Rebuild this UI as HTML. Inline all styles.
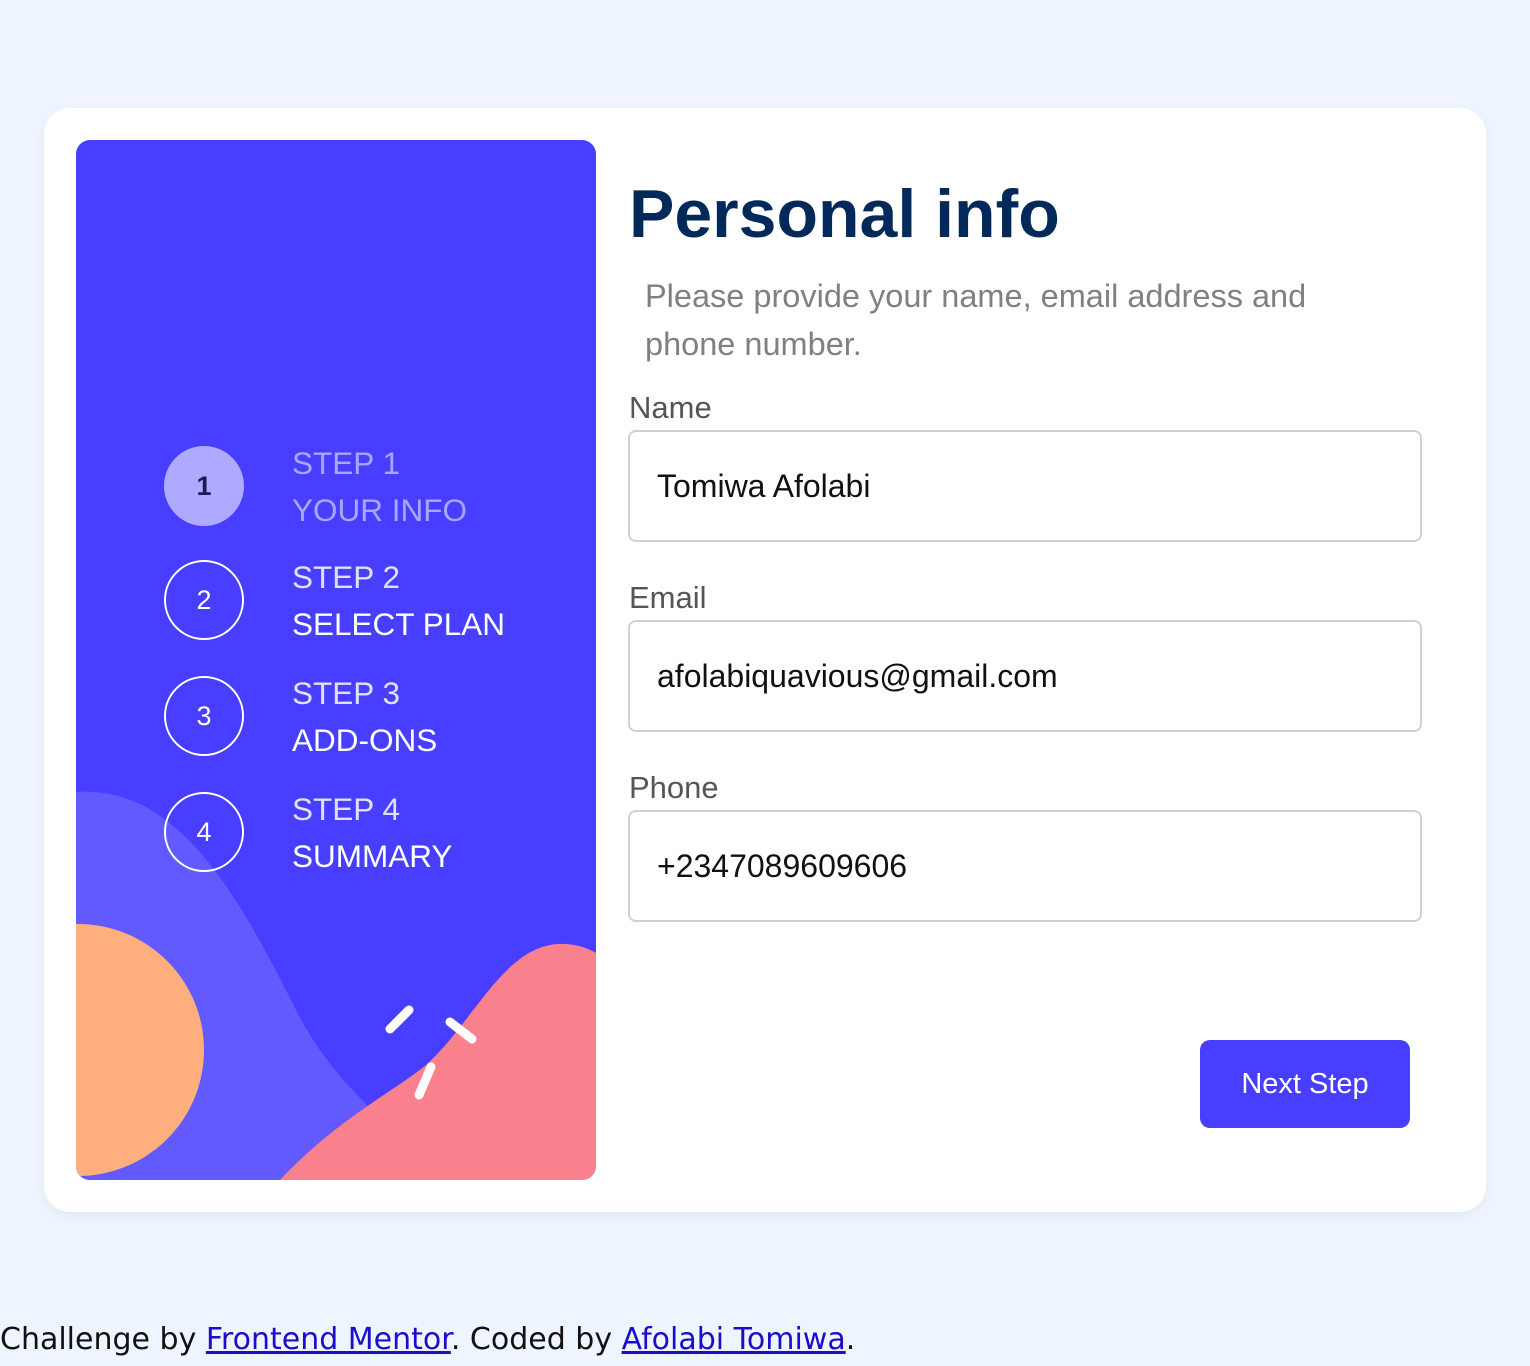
<!DOCTYPE html>
<html><head><meta charset="utf-8"><style>
*{margin:0;padding:0;box-sizing:border-box}
body{width:1530px;height:1366px;background:#eff5fe;font-family:"Liberation Sans",Arial,sans-serif;position:relative;overflow:hidden}
.card{position:absolute;left:44px;top:108px;width:1442px;height:1104px;background:#fff;border-radius:26px;box-shadow:0 4px 12px rgba(0,0,0,.05)}
.side{position:absolute;left:76px;top:140px;width:520px;height:1040px;background:#483eff;border-radius:14px;overflow:hidden}
.circ{position:absolute;left:88px;width:80px;height:80px;border:2px solid #fff;border-radius:50%;color:#fff;font-size:27px;text-align:center;line-height:76px}
.lbl{position:absolute;left:216px;color:#fff;font-size:31.5px;line-height:47px}
.lbl .s{color:#e0e0ee}
h1{position:absolute;left:629px;top:175px;font-size:68px;color:#02295a;font-weight:bold}
.sub{position:absolute;left:645px;top:272px;font-size:32.5px;line-height:48px;color:#808080;width:720px}
.fl{position:absolute;left:629px;font-size:31px;color:#555}
.inp{position:absolute;left:628px;width:794px;height:112px;border:2px solid #d0d0d6;border-radius:8px;font-size:32px;color:#111;padding-left:27px;line-height:108px}
.btn{position:absolute;left:1200px;top:1040px;width:210px;height:88px;background:#483eff;border-radius:10px;color:#fff;font-size:29px;text-align:center;line-height:88px}
.foot{position:absolute;left:0;top:1322px;font-size:30px;font-family:"Comic Sans MS","DejaVu Sans",cursive;color:#111}
.foot a{color:#1a0dcc;text-decoration:underline}
</style></head><body>
<div class="card"></div>
<div class="side">
<svg width="520" height="1040" style="position:absolute;left:0;top:0">
<path d="M0,652 C100,645 160,750 220,870 C260,950 330,1000 380,1040 L0,1040 Z" fill="#6259ff"/>
<circle cx="2" cy="910" r="126" fill="#ffaf7e"/>
<path d="M204,1040 C260,980 320,950 350,925 C400,880 430,800 490,804 C505,805 515,810 520,813 L520,1040 Z" fill="#f9818e"/>
<g stroke="#fff" stroke-width="9" stroke-linecap="round">
<line x1="314" y1="889" x2="333" y2="870"/><line x1="374" y1="882" x2="396" y2="899"/><line x1="343" y1="955" x2="355" y2="927"/>
</g>
</svg>
<div class="circ" style="top:306px;background:#aeaaff;border-color:#aeaaff;color:#1c1a55;font-weight:bold">1</div>
<div class="lbl" style="top:300px;color:#a9a6ff"><span>STEP 1</span><br>YOUR INFO</div>
<div class="circ" style="top:420px">2</div>
<div class="lbl" style="top:414px"><span class="s">STEP 2</span><br>SELECT PLAN</div>
<div class="circ" style="top:536px">3</div>
<div class="lbl" style="top:530px"><span class="s">STEP 3</span><br>ADD-ONS</div>
<div class="circ" style="top:652px">4</div>
<div class="lbl" style="top:646px"><span class="s">STEP 4</span><br>SUMMARY</div>
</div>
<h1>Personal info</h1>
<div class="sub">Please provide your name, email address and phone number.</div>
<div class="fl" style="top:390px">Name</div>
<div class="inp" style="top:430px">Tomiwa Afolabi</div>
<div class="fl" style="top:580px">Email</div>
<div class="inp" style="top:620px">afolabiquavious@gmail.com</div>
<div class="fl" style="top:770px">Phone</div>
<div class="inp" style="top:810px">+2347089609606</div>
<div class="btn">Next Step</div>
<div class="foot">Challenge by <a>Frontend Mentor</a>. Coded by <a>Afolabi Tomiwa</a>.</div>
</body></html>
